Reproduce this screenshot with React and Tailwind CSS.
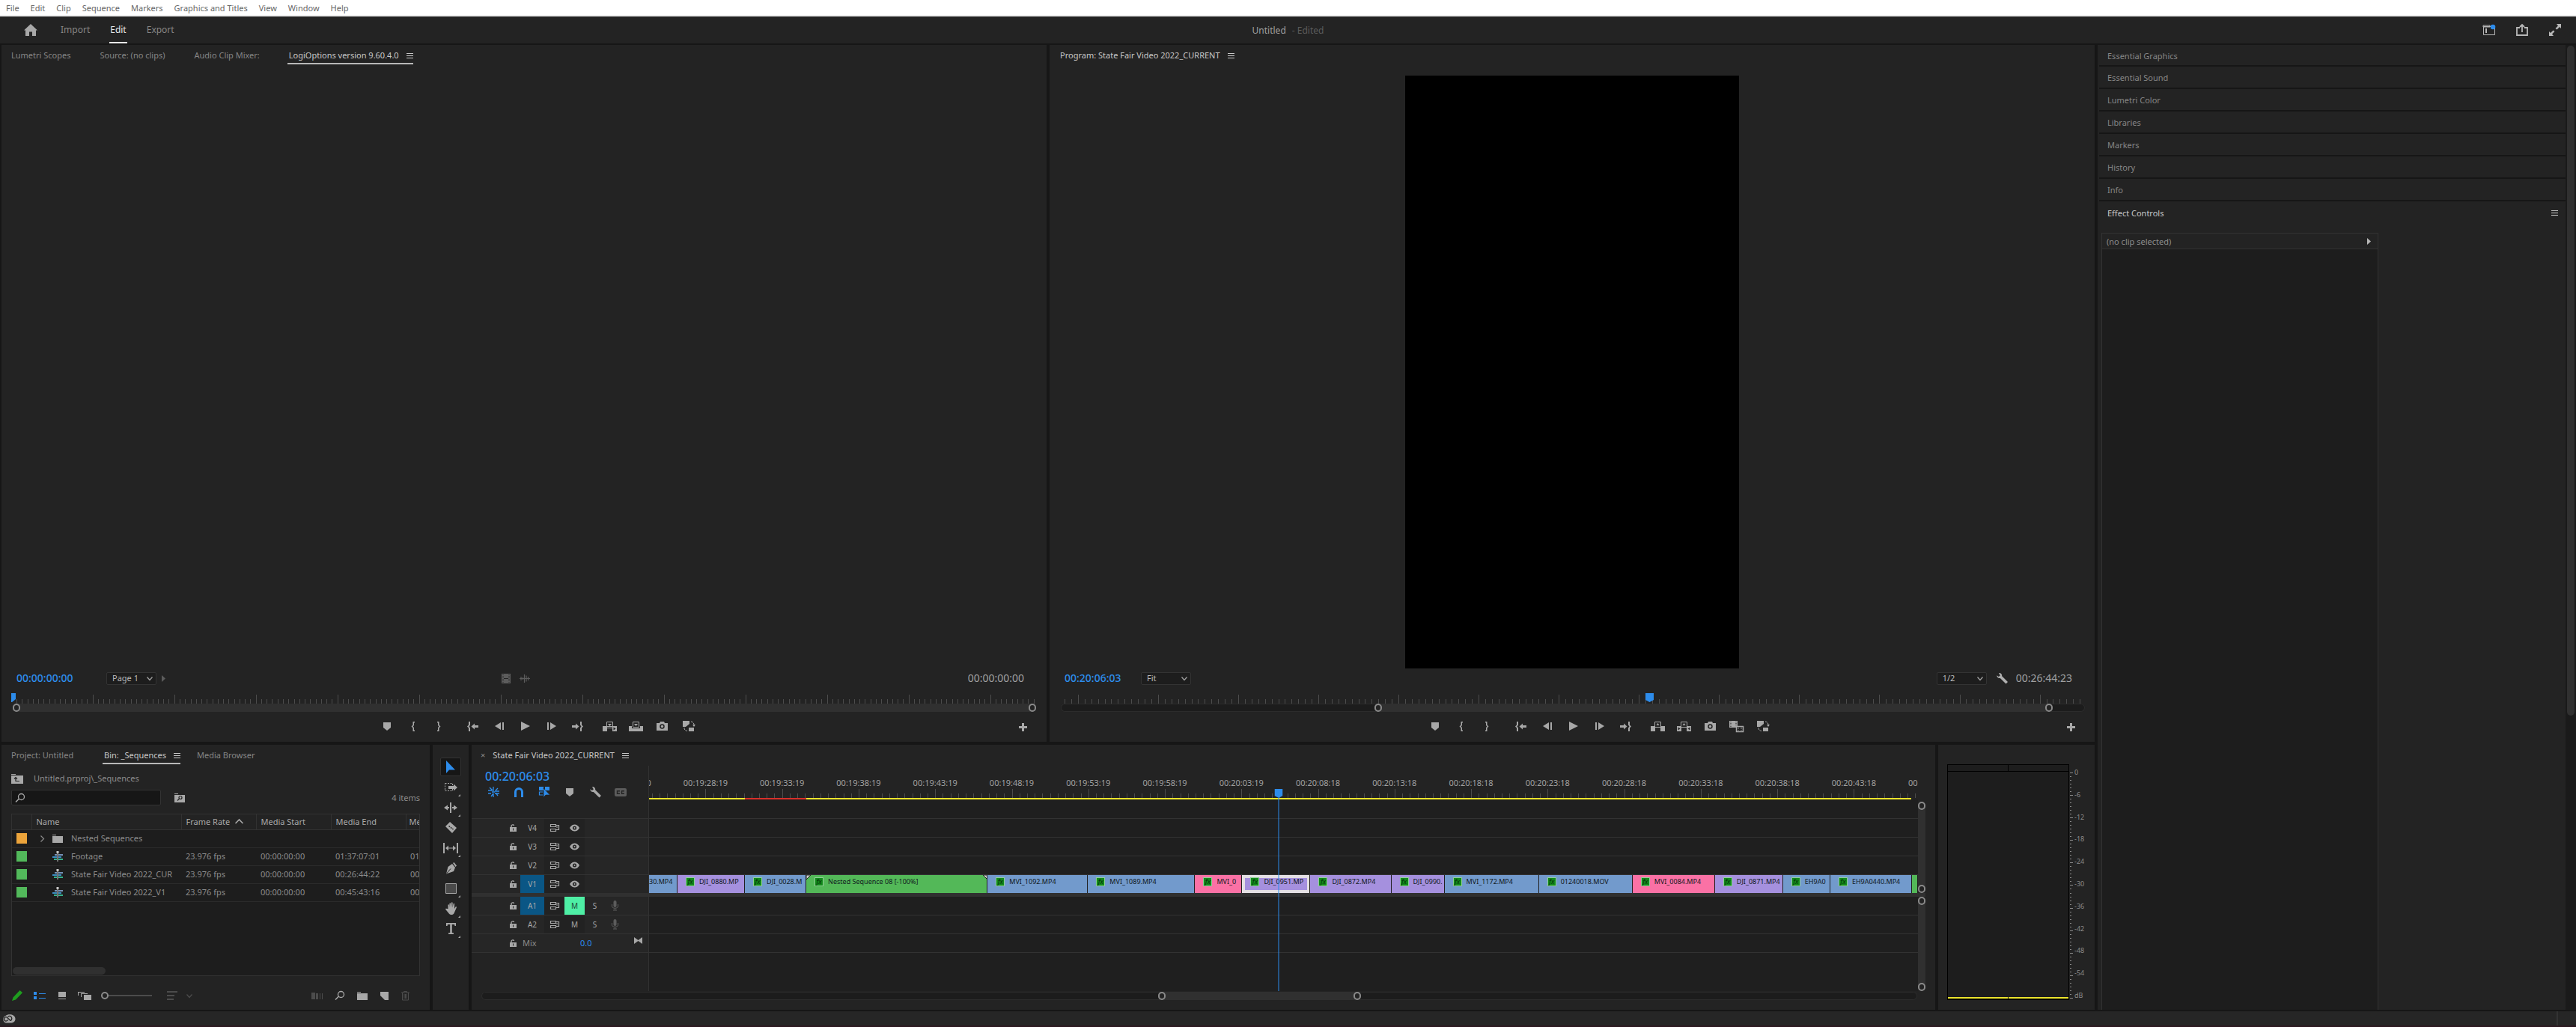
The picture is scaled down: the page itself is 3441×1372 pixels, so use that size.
import { useState } from "react";
import clsx from "clsx";

const MENUS = ["File", "Edit", "Clip", "Sequence", "Markers", "Graphics and Titles", "View", "Window", "Help"];

const SIDE_PANELS = ["Essential Graphics", "Essential Sound", "Lumetri Color", "Libraries", "Markers", "History", "Info"];

const BIN_ITEMS = [
  { name: "Nested Sequences", folder: true, color: "bg-[#eca43b]" },
  { name: "Footage", color: "bg-[#52b95b]", rate: "23.976 fps", start: "00:00:00:00", end: "01:37:07:01", rest: "01" },
  { name: "State Fair Video 2022_CUR", color: "bg-[#52b95b]", rate: "23.976 fps", start: "00:00:00:00", end: "00:26:44:22", rest: "00" },
  { name: "State Fair Video 2022_V1", color: "bg-[#52b95b]", rate: "23.976 fps", start: "00:00:00:00", end: "00:45:43:16", rest: "00" },
];

const BLUE = "bg-[#729acc]";
const PURPLE = "bg-[#a590de]";
const GREEN = "bg-[#53b858]";
const PINK = "bg-[#fa71a5]";

// size = share of the visible range of the timeline
const CLIPS = [
  { name: "30.MP4", size: 38, color: BLUE, cut: true },
  { name: "DJI_0880.MP", size: 90, color: PURPLE },
  { name: "DJI_0028.M", size: 82, color: BLUE },
  { name: "Nested Sequence 08 [-100%]", size: 242, color: GREEN, nested: true },
  { name: "MVI_1092.MP4", size: 134, color: BLUE },
  { name: "MVI_1089.MP4", size: 143, color: BLUE },
  { name: "MVI_0", size: 63, color: PINK },
  { name: "DJI_0951.MP", size: 91, color: PURPLE, selected: true },
  { name: "DJI_0872.MP4", size: 108, color: PURPLE },
  { name: "DJI_0990.", size: 71, color: PURPLE },
  { name: "MVI_1172.MP4", size: 126, color: BLUE },
  { name: "01240018.MOV", size: 125, color: BLUE },
  { name: "MVI_0084.MP4", size: 110, color: PINK },
  { name: "DJI_0871.MP4", size: 91, color: PURPLE },
  { name: "EH9A0", size: 63, color: BLUE },
  { name: "EH9A0440.MP4", size: 109, color: BLUE },
  { name: "", size: 8, color: GREEN, cut: true },
];

const TIMES = [
  "00:19:23:20", "00:19:28:19", "00:19:33:19", "00:19:38:19", "00:19:43:19", "00:19:48:19",
  "00:19:53:19", "00:19:58:19", "00:20:03:19", "00:20:08:18", "00:20:13:18", "00:20:18:18",
  "00:20:23:18", "00:20:28:18", "00:20:33:18", "00:20:38:18", "00:20:43:18", "00:20:48:18",
];

const DB = ["0", "-6", "-12", "-18", "-24", "-30", "-36", "-42", "-48", "-54", "dB"];

const ICONS = {
  home: <path d="M9 0 18 8.500h-2V16h-5v-5.500H7V16H2V8.500H0z" />,
  menu: <path d="M0 0h9v1H0zM0 3h9v1H0zM0 6h9v1H0z" />,
  marker: <path d="M0 0h10v7l-5 4-5-4z" />,
  markIn: <path d="M2.500 0H5v1.500H4V5L2.500 6.500 4 8v3.500h1V13H2.500V8.500L.5 6.500l2-2z" />,
  markOut: <path d="M2.500 0H0v1.500h1V5l1.500 1.500L1 8v3.500H0V13h2.500V8.500l2-2-2-2z" />,
  goIn: <path d="M2 0h2v4.500L2.500 6.500 4 8.500V13H2V8.500L0 6.500l2-2zM5.500 6.500 10 2.500V5h5v3h-5v2.500z" />,
  goOut: <path d="M13 0h-2v4.500l1.500 2-1.500 2V13h2V8.500l2-2-2-2zM9.500 6.500 5 2.500V5H0v3h5v2.500z" />,
  stepBack: <path d="M8 0v10L0 5zM10 0h2v10h-2z" />,
  stepForward: <path d="M4 0v10l8-5zM0 0h2v10H0z" />,
  play: <path d="M0 0v12l12-6z" />,
  insert: (
    <>
      <path d="M0 6h6v7H0zM13 6h6v7h-6z" />
      <path d="M5.500 .5h8v6h-8z" fill="none" stroke="currentColor" />
      <path d="M7 3h5L9.500 6zM6 8h7v1H6z" />
      <path d="M14.500 7.500v4l3-2z" fill="#232323" />
    </>
  ),
  overwrite: (
    <>
      <path d="M0 6h4v3h11V6h4v7H0z" />
      <path d="M5.500 .5h8v7h-8z" fill="none" stroke="currentColor" />
      <path d="M7 3h5L9.500 6z" />
    </>
  ),
  lift: (
    <>
      <path d="M0 6h6v7H0zM13 6h6v7h-6z" />
      <path d="M5.500 .5h8v7h-8z" fill="none" stroke="currentColor" />
      <path d="M7.500 5h4l-2-3z" />
    </>
  ),
  extract: (
    <>
      <path d="M0 6h6v7H0zM13 6h6v7h-6z" />
      <path d="M5.500 .5h8v7h-8z" fill="none" stroke="currentColor" />
      <path d="M7.500 5h4l-2-3z" />
      <path d="M1.500 7.500v4l3-2zM17.500 7.500v4l-3-2z" fill="#232323" />
    </>
  ),
  camera: (
    <>
      <path d="M0 2h4l1-2h5l1 2h4v10H0z" />
      <circle cx="7.500" cy="6.500" r="2.500" fill="none" stroke="#232323" strokeWidth="1.500" />
    </>
  ),
  compare: (
    <>
      <path d="M0 0h11v9H0z" />
      <path d="M9.500 7.500h9v7h-9z" fill="#232323" stroke="currentColor" strokeWidth="1.500" />
      <path d="M2 1v7M9 1v6" stroke="#232323" strokeDasharray="1 1" />
      <path d="M12 8v6M16 8v6" stroke="currentColor" strokeDasharray="1 1" />
    </>
  ),
  proxy: (
    <>
      <path d="M0 0h9v4L4 8H0zM8 9h7v5H8z" />
      <path d="M11 1c3 .5 4 2 4 5M2 9c0 3 1.500 4 4 4.500" fill="none" stroke="currentColor" strokeDasharray="3 1" />
      <path d="M13 5h4l-2 3z" />
    </>
  ),
  plus: <path d="M4 0h3v4h4v3H7v4H4V7H0V4h4z" />,
  film: (
    <>
      <path d="M0 0h12v13H0z" />
      <path d="M2 1v11M10 1v11" stroke="#232323" strokeDasharray="1 1" />
      <path d="M3 6h6v1H3z" fill="#232323" />
    </>
  ),
  wave: <path d="M0 5.500h14M2 3v5M4.500 4v3M6.500 0v11M9 1.500v8M11.500 3v5" stroke="currentColor" strokeWidth="1.200" />,
  triangle: <path d="M0 0v9l5-4.500z" />,
  chevronDown: <path d="M.5 .5 4 4.500 7.500 .5" fill="none" stroke="currentColor" strokeWidth="1.300" />,
  chevronRight: <path d="M.5 .5 4.500 4.500.5 8.500" fill="none" stroke="currentColor" strokeWidth="1.200" />,
  sortUp: <path d="M.5 6 5.500 1l5 5" fill="none" stroke="currentColor" strokeWidth="1.600" />,
  wrench: <path d="M3 0c2.500-.3 4.500 1.500 4.200 4.200L15 12l-2.500 2.500L4.800 7C2.500 7.500.3 5.800.3 3.200L2.800 5l2-1.500z" />,
  folder: <path d="M0 0h5v1H0zM0 2h14v9H0z" />,
  folderUp: (
    <>
      <path d="M0 0h6v1H0zM0 2h16v11H0z" />
      <path d="M6 4.500v5h5M4 6.500l2-2 2 2" fill="none" stroke="#232323" strokeWidth="1.200" />
    </>
  ),
  folderSearch: (
    <>
      <path d="M0 0h5v1H0zM0 2h14v10H0z" />
      <circle cx="8" cy="5.500" r="2" fill="none" stroke="#232323" strokeWidth="1.200" />
      <path d="M6.500 7 4 9.500" stroke="#232323" strokeWidth="1.200" />
    </>
  ),
  search: (
    <>
      <circle cx="7.500" cy="4.500" r="4" fill="none" stroke="currentColor" strokeWidth="1.300" />
      <path d="M4.500 7 0 11.500" stroke="currentColor" strokeWidth="1.600" />
    </>
  ),
  sequence: (
    <>
      <path d="M3 4h3v2H3zM8 4h6v2H8z" fill="#7592b8" />
      <path d="M0 7h6v2H0zM8 7h4v2H8z" fill="#3c8fc4" />
      <path d="M2 10h4v2H2zM8 10h6v2H8z" fill="#35b08a" />
      <path d="M6.500 1h1v13h-1zM5.500 0h3v3h-3z" fill="#c8c8c8" />
    </>
  ),
  pencil: <path d="M0 13l1.500-4.500L9.500 0 13 3.200 5 11.500zM9.500 0l1-1L14 2l-1 1.200z" />,
  list: <path d="M0 0h4v4H0zM0 6h4v4H0zM7 2h9v1H7zM7 8h9v1H7z" />,
  iconView: <path d="M0 0h10v7H0zM0 9h10v1H0z" />,
  freeform: <path d="M0 0h9v1H1v4H0zM4 2h9v1H5v4H4zM8 4h10v7H8z" />,
  sort: <path d="M0 0h14v2H0zM0 5h10v2H0zM0 10h9v2H0z" />,
  automate: <path d="M0 0h5v9H0zM6 1h3v8H6zM11 1h1v8h-1zM14 1h1v8h-1z" />,
  newItem: <path d="M0 0h11v11H6L0 5z" />,
  trash: <path d="M0 2h11M3.500 2V.5h4V2M1.500 2v10h8V2M4 4v6M5.500 4v6M7 4v6" fill="none" stroke="currentColor" />,
  arrow: <path d="M0 0v17l4-4.500 8 0z" />,
  trackSelect: (
    <>
      <path d="M.5 .5h10v10H.5z" fill="none" stroke="currentColor" strokeDasharray="2 1.500" />
      <path d="M5 4h7V1.500L17 6l-5 4.500V8H5z" />
    </>
  ),
  ripple: <path d="M8 0h2v14H8zM7 6v2H5v2.500L0 7l5-3.500V6zM11 6v2h2v2.500L18 7l-5-3.500V6z" />,
  razor: (
    <>
      <path d="M6 0 15 8 9 15 0 6z" />
      <path d="M4.500 5.500 10.500 10" stroke="#232323" strokeWidth="1.500" strokeDasharray="2 1" />
    </>
  ),
  slip: <path d="M0 0h2v14H0zM18 0h2v14h-2zM3 7l4-3.500v3h6v-3L17 7l-4 3.500v-3H7v3z" />,
  pen: (
    <>
      <path d="M10 1l1.500-1L15 4.500 13.500 6zM9 2l4 5-2 5-10 3.500L3.500 6z" />
      <path d="M1.500 15 7 8.500" stroke="#232323" />
    </>
  ),
  rect: <path d="M.5 .5h14v13H.5z" fill="#4a4a4a" stroke="currentColor" />,
  hand: <path d="M3.500 8V3c0-1 1.500-1 1.500 0v3.500l.5-5.500c0-1 1.500-1 1.500 0v5.500L8 0c0-1 1.600-1 1.600 0v6.500l1-5c0-1 1.500-.8 1.500.2L12 8l1.500-2.500c.6-.8 1.800-.2 1.400.7L12 13c-.5 1.500-1.500 3-3.500 3h-1C6 16 5 15 4 13.500L.3 9c-.6-.9.6-1.800 1.500-1z" />,
  type: <path d="M0 0h13v4h-1.500L11 2H7.800v11l2.200.5v1.500H3V13.500l2.200-.5V2H2l-.5 2H0z" />,
  nest: <path d="M0 5h5M2 1l4 4M7 0v6M9 6h6M10 5l3-3M0 9h4M4 13l3-4M7 9v5M10 8l3 4M9 9h6M5 7h4" fill="none" stroke="currentColor" strokeWidth="1.300" />,
  magnet: <path d="M0 13V6a6 6 0 0 1 12 0v7H9V6a3 3 0 0 0-6 0v7z" />,
  linked: (
    <>
      <path d="M0 0h6v5H0zM8 0h6v5H8z" />
      <path d="M5 7H.5v4H5" fill="none" stroke="currentColor" strokeWidth="1.200" />
      <path d="M6 2v12l3-3h5.500z" stroke="#232323" strokeWidth=".6" />
    </>
  ),
  cc: (
    <>
      <rect width="16" height="11" rx="2" />
      <path d="M7 3.800H3.500v3.500H7M13 3.800H9.500v3.500H13" fill="none" stroke="#232323" strokeWidth="1.400" />
    </>
  ),
  lock: (
    <>
      <path d="M0 4h9v6H0z" />
      <path d="M2 4V2.500C2 .5 5.500.2 5.500 2" fill="none" stroke="currentColor" strokeWidth="1.400" />
      <path d="M4 5.500h1v3H4z" fill="#232323" />
    </>
  ),
  sync: <path d="M.5 .5h7v3h-7zM.5 6.500h7v3h-7zM8 1.500h3.500v6H8M8 4h2" fill="none" stroke="currentColor" strokeWidth="1.200" />,
  eye: (
    <>
      <path d="M0 5c3-6 10-6 13 0-3 6-10 6-13 0z" />
      <circle cx="6.500" cy="5" r="2.600" fill="#232323" />
      <circle cx="6.500" cy="5" r="1" />
    </>
  ),
  mic: (
    <>
      <rect x="2.500" width="4" height="9" rx="2" />
      <path d="M.5 5v3c0 3 8 3 8 0V5M4.500 10v3M2 13h5" fill="none" stroke="currentColor" />
    </>
  ),
  collapse: <path d="M0 0l5.500 4L11 0v9L5.500 5 0 9z" />,
  workspace: (
    <>
      <path d="M.5 2.500h15v11H.5zM0 1h9v2H0z" fill="none" stroke="currentColor" />
      <path d="M3 5h2v6H3z" />
      <circle cx="13" cy="3" r="3.300" fill="#2d8ceb" />
    </>
  ),
  share: <path d="M5 5H1v10h14V5h-4M8 11V2M5 4l3-3 3 3" fill="none" stroke="currentColor" strokeWidth="1.800" />,
  fullscreen: <path d="M16 0v6l-2-2-3.500 3.500L8.500 6 12 2.500 10 0zM0 16v-6l2 2 3.500-3.500 2 1.500L4 13.500 6 16z" />,
  cloud: (
    <>
      <path d="M5 12.500a5 5 0 0 1-.5-9.500C8-.5 17.500 1 17.500 7c0 4-3 5.500-6 5.500z" fill="#a8a8a8" />
      <path d="M11 9.500 6.500 5.200a2.600 2.600 0 1 0 0 4.300l1-1M7.500 4.200a3.200 3.200 0 1 1 3.500 5.300" fill="none" stroke="#232323" strokeWidth="1.300" />
    </>
  ),
};

function Icon({ name, w, h, className }) {
  return (
    <svg width={w} height={h} viewBox={`0 0 ${w} ${h}`} fill="currentColor" className={clsx("shrink-0 overflow-visible", className)} aria-hidden="true">
      {ICONS[name]}
    </svg>
  );
}

function IconButton({ label, name, w, h, className, children }) {
  return (
    <button type="button" aria-label={label} className={clsx("flex shrink-0 items-center justify-center", className)}>
      <Icon name={name} w={w} h={h} />
      {children}
    </button>
  );
}

function Tab({ label, active, underline = true, className }) {
  return (
    <button
      type="button"
      className={clsx(
        "flex h-[26px] shrink-0 items-center gap-[10px] border-b-2 pt-1 pl-[2px]",
        active ? "text-[#c8c8c8]" : "text-[#868686]",
        active && underline ? "border-[#b8b8b8]" : "border-transparent",
        className
      )}
    >
      <span>{label}</span>
      {active && <Icon name="menu" w={9} h={7} />}
    </button>
  );
}

function Dropdown({ label, options, className }) {
  return (
    <span className={clsx("relative flex h-[17px]", className)}>
      <select aria-label={label} className="w-full appearance-none rounded-[2px] border border-[#333333] bg-[#1d1d1d] pl-[7px] text-[11px] leading-[14px] text-[#b8b8b8]">
        {options.map((o) => (
          <option key={o}>{o}</option>
        ))}
      </select>
      <Icon name="chevronDown" w={8} h={5} className="pointer-events-none absolute top-[6px] right-[5px] text-[#a0a0a0]" />
    </span>
  );
}

function Ring() {
  return <span className="h-[11px] w-[10px] shrink-0 rounded-full border-2 border-[#8a8a8a] bg-[#232323]" />;
}

// horizontal zoom bar: before / thumb / after are shares of the track
function ZoomBar({ before, thumb, after, className }) {
  return (
    <div className={clsx("flex h-[11px] rounded-full bg-[#1c1c1c] ring-1 ring-[#2c2c2c] ring-inset", className)}>
      <div style={{ flexGrow: before }} className="basis-0" />
      <div style={{ flexGrow: thumb }} className="flex basis-0 justify-between rounded-full bg-[#303030]">
        <Ring />
        <Ring />
      </div>
      <div style={{ flexGrow: after }} className="basis-0" />
    </div>
  );
}

function Ruler({ count, every, first }) {
  return (
    <div className="flex h-full items-end justify-between">
      {Array.from({ length: count }, (_, i) => (
        <span key={i} className={clsx("w-px bg-[#4c4c4c]", i % every === first ? "h-[12px]" : "h-[6px]")} />
      ))}
    </div>
  );
}

function Transport({ edits }) {
  const cell = "h-[22px] w-[35px]";
  return (
    <div className="mt-2 grid grid-cols-[1fr_auto_1fr] text-[#a8a8a8]">
      <div />
      <div className="flex pl-[36px]">
        <IconButton label="Add Marker" name="marker" w={10} h={11} className={cell} />
        <IconButton label="Mark In" name="markIn" w={5} h={13} className={cell} />
        <IconButton label="Mark Out" name="markOut" w={5} h={13} className={cell} />
        <IconButton label="Go to In" name="goIn" w={15} h={13} className="ml-[10px] h-[22px] w-[35px]" />
        <IconButton label="Step Back" name="stepBack" w={12} h={10} className={cell} />
        <IconButton label="Play" name="play" w={12} h={12} className={cell} />
        <IconButton label="Step Forward" name="stepForward" w={12} h={10} className={cell} />
        <IconButton label="Go to Out" name="goOut" w={15} h={13} className={cell} />
        <div className="flex w-[148px] pl-2">
          {edits.map((e) => (
            <IconButton key={e.name} label={e.label} name={e.name} w={e.w} h={e.h} className={cell} />
          ))}
        </div>
      </div>
      <IconButton label="Button Editor" name="plus" w={11} h={11} className="mt-[1px] mr-[26px] h-[22px] justify-self-end" />
    </div>
  );
}

function SourceMonitor() {
  return (
    <section className="flex min-w-0 flex-col bg-[#232323] pb-[9px]">
      <div className="flex gap-[37px] pl-[11px]">
        <Tab label="Lumetri Scopes" />
        <Tab label="Source: (no clips)" />
        <Tab label="Audio Clip Mixer:" />
        <Tab label="LogiOptions version 9.60.4.0" active />
      </div>
      <div className="flex-1" />
      <div className="grid h-[18px] grid-cols-[1fr_auto_1fr] items-center pr-[30px] pl-[20px]">
        <div className="flex items-center">
          <span className="w-[120px] text-[14px] leading-4 font-medium text-[#2d8ceb]">00:00:00:00</span>
          <Dropdown label="Page" options={["Page 1"]} className="w-[67px]" />
          <IconButton label="Next Page" name="triangle" w={5} h={9} className="ml-[7px] text-[#5c5c5c]" />
        </div>
        <div className="flex items-center gap-3 pr-[12px] text-[#5c5c5c]">
          <Icon name="film" w={12} h={13} />
          <Icon name="wave" w={14} h={11} />
        </div>
        <span className="text-right text-[14px] leading-4 text-[#a0a0a0]">00:00:00:00</span>
      </div>
      <div className="relative mt-[11px] h-[14px] pr-[15px] pl-[20px]">
        <Ruler count={188} every={15} first={14} />
        <svg width="6" height="12" className="absolute top-0 left-[13px]" fill="#2d8ceb">
          <path d="M0 0h6v8l-5 4H0z" />
        </svg>
      </div>
      <ZoomBar before={0} thumb={1} after={0} className="mr-[14px] ml-[15px]" />
      <Transport
        edits={[
          { label: "Insert", name: "insert", w: 19, h: 13 },
          { label: "Overwrite", name: "overwrite", w: 19, h: 13 },
          { label: "Export Frame", name: "camera", w: 15, h: 12 },
          { label: "Toggle Proxies", name: "proxy", w: 16, h: 14 },
        ]}
      />
    </section>
  );
}

function ProgramMonitor() {
  return (
    <section className="flex min-w-0 flex-col bg-[#232323] pb-[9px]">
      <div className="flex pl-[12px]">
        <Tab label="Program: State Fair Video 2022_CURRENT" active underline={false} />
      </div>
      <div className="mt-[15px] mb-1 flex min-h-0 flex-1 justify-center">
        <div className="aspect-[9/16] h-full bg-black" />
      </div>
      <div className="flex h-[18px] items-center pr-[30px] pl-[20px]">
        <span className="w-[102px] text-[14px] leading-4 font-medium text-[#2d8ceb]">00:20:06:03</span>
        <Dropdown label="Zoom Level" options={["Fit"]} className="w-[67px]" />
        <div className="flex-1" />
        <Dropdown label="Playback Resolution" options={["1/2"]} className="w-[67px]" />
        <IconButton label="Settings" name="wrench" w={15} h={15} className="mr-[11px] ml-[13px] text-[#b0b0b0]" />
        <span className="text-[14px] leading-4 text-[#a0a0a0]">00:26:44:23</span>
      </div>
      <div className="relative mt-[11px] h-[14px] pr-[17px] pl-[20px]">
        <Ruler count={153} every={12} first={2} />
        <svg width="11" height="12" className="absolute top-0 left-[57%]" fill="#2d8ceb">
          <path d="M0 0h11v9l-5.500 3L0 9z" />
        </svg>
      </div>
      <ZoomBar before={419} thumb={905} after={43} className="mr-[13px] ml-[15px]" />
      <Transport
        edits={[
          { label: "Lift", name: "lift", w: 19, h: 13 },
          { label: "Extract", name: "extract", w: 19, h: 13 },
          { label: "Export Frame", name: "camera", w: 15, h: 12 },
          { label: "Comparison View", name: "compare", w: 19, h: 15 },
          { label: "Toggle Proxies", name: "proxy", w: 16, h: 14 },
        ]}
      />
    </section>
  );
}

function ProjectPanel() {
  const [query, setQuery] = useState("");
  const th = "border-r border-[#323232] pl-[6px] text-left font-normal whitespace-nowrap";
  const td = "pl-[6px] whitespace-nowrap";

  return (
    <section className="flex w-[572px] shrink-0 flex-col bg-[#232323] px-[13px] pb-2">
      <div className="-ml-[2px] flex">
        <Tab label="Project: Untitled" className="w-[124px]" />
        <Tab label="Bin: _Sequences" active />
        <Tab label="Media Browser" className="ml-[20px]" />
      </div>
      <div className="mt-[9px] flex h-[20px] items-center gap-[14px] text-[#8c8c8c]">
        <IconButton label="Up One Level" name="folderUp" w={16} h={13} className="text-[#a8a8a8]" />
        <span>Untitled.prproj\_Sequences</span>
      </div>
      <div className="mt-[5px] flex h-[21px] items-center">
        <label className="flex h-full w-[200px] items-center rounded-[2px] border border-[#333333] bg-[#161616] px-[5px] text-[#a8a8a8]">
          <Icon name="search" w={12} h={12} />
          <input
            type="text"
            aria-label="Search bin"
            value={query}
            onChange={(e) => setQuery(e.target.value)}
            className="ml-2 w-full min-w-0 bg-transparent outline-none"
          />
        </label>
        <IconButton label="Create Search Bin" name="folderSearch" w={14} h={12} className="ml-[18px] text-[#a8a8a8]" />
        <span className="ml-auto text-[#8c8c8c]">4 items</span>
      </div>

      <div className="mt-[11px] flex min-h-0 flex-1 flex-col overflow-hidden border border-[#323232] bg-[#1d1d1d]">
        <table className="w-full table-fixed border-collapse text-[#8c8c8c]">
          <colgroup>
            <col className="w-[26px]" />
            <col className="w-[200px]" />
            <col className="w-[100px]" />
            <col className="w-[100px]" />
            <col className="w-[100px]" />
            <col />
          </colgroup>
          <thead>
            <tr className="h-[20px] border-b border-[#323232] bg-[#232323] text-[#a8a8a8]">
              <th className={th} aria-label="Label" />
              <th className={th}>Name</th>
              <th className={th}>
                <span className="flex items-center gap-[7px]">
                  Frame Rate <Icon name="sortUp" w={11} h={7} />
                </span>
              </th>
              <th className={th}>Media Start</th>
              <th className={th}>Media End</th>
              <th className="pl-[4px] text-left font-normal">Me</th>
            </tr>
          </thead>
          <tbody>
            {BIN_ITEMS.map((item) => (
              <tr key={item.name} className="h-[24px] border-b border-[#2b2b2b]">
                <td>
                  <span className={clsx("mx-auto block h-[14px] w-[14px]", item.color)} />
                </td>
                <td className="whitespace-nowrap">
                  <span className="flex items-center">
                    <span className="flex w-[28px] justify-center">{item.folder && <Icon name="chevronRight" w={5} h={9} />}</span>
                    <span className="flex w-[25px] text-[#a8a8a8]">
                      <Icon name={item.folder ? "folder" : "sequence"} w={14} h={item.folder ? 11 : 14} />
                    </span>
                    {item.name}
                  </span>
                </td>
                <td className={td}>{item.rate}</td>
                <td className={td}>{item.start}</td>
                <td className={td}>{item.end}</td>
                <td className={td}>{item.rest}</td>
              </tr>
            ))}
          </tbody>
        </table>
        <div className="mt-auto mb-[1px] ml-[1px] h-[10px] w-[124px] shrink-0 rounded-full bg-[#303030]" />
      </div>

      <div className="mt-[15px] flex h-[22px] items-center text-[#a8a8a8]">
        <IconButton label="Project Writable" name="pencil" w={14} h={13} className="w-[16px] text-[#1f9d1f]" />
        <IconButton label="List View" name="list" w={16} h={10} className="ml-[14px] text-[#2d8ceb]" />
        <IconButton label="Icon View" name="iconView" w={10} h={10} className="ml-[17px]" />
        <IconButton label="Freeform View" name="freeform" w={18} h={11} className="ml-[16px]" />
        <input
          type="range"
          aria-label="Icon Size"
          defaultValue={0}
          className="ml-[13px] w-[68px] appearance-none bg-transparent [&::-webkit-slider-runnable-track]:h-[2px] [&::-webkit-slider-runnable-track]:bg-[#4c4c4c] [&::-webkit-slider-thumb]:-mt-[4px] [&::-webkit-slider-thumb]:h-[10px] [&::-webkit-slider-thumb]:w-[10px] [&::-webkit-slider-thumb]:appearance-none [&::-webkit-slider-thumb]:rounded-full [&::-webkit-slider-thumb]:border-2 [&::-webkit-slider-thumb]:border-[#8a8a8a] [&::-webkit-slider-thumb]:bg-[#232323]"
        />
        <IconButton label="Sort Icons" name="sort" w={14} h={12} className="ml-[20px] text-[#4c4c4c]" />
        <IconButton label="Sort Options" name="chevronDown" w={8} h={5} className="ml-[12px] text-[#4c4c4c]" />
        <div className="ml-auto flex items-center gap-[17px] pr-[14px]">
          <IconButton label="Automate to Sequence" name="automate" w={15} h={9} className="text-[#4c4c4c]" />
          <IconButton label="Find" name="search" w={12} h={12} />
          <IconButton label="New Bin" name="folder" w={14} h={11} />
          <IconButton label="New Item" name="newItem" w={11} h={11} />
          <IconButton label="Clear" name="trash" w={11} h={12} className="text-[#4c4c4c]" />
        </div>
      </div>
    </section>
  );
}

const TOOLS = [
  { label: "Selection Tool", name: "arrow", w: 12, h: 17 },
  { label: "Track Select Forward Tool", name: "trackSelect", w: 17, h: 11, more: true },
  { label: "Ripple Edit Tool", name: "ripple", w: 18, h: 14, more: true },
  { label: "Razor Tool", name: "razor", w: 15, h: 15 },
  { label: "Slip Tool", name: "slip", w: 20, h: 14, more: true },
  { label: "Pen Tool", name: "pen", w: 15, h: 16 },
  { label: "Rectangle Tool", name: "rect", w: 15, h: 14, more: true },
  { label: "Hand Tool", name: "hand", w: 15, h: 16, more: true },
  { label: "Type Tool", name: "type", w: 13, h: 15, more: true },
];

function Toolbox() {
  return (
    <section className="flex w-[48px] shrink-0 flex-col items-center gap-[2px] bg-[#232323] pt-[17px] text-[#a8a8a8]">
      {TOOLS.map((t, i) => (
        <IconButton
          key={t.name}
          label={t.label}
          name={t.name}
          w={t.w}
          h={t.h}
          className={clsx("relative h-[25px] w-[28px] rounded-[2px]", i === 0 && "border border-[#333333] bg-[#161616] text-[#2d8ceb]")}
        >
          {t.more && (
            <svg width="3" height="3" className="absolute right-[1px] bottom-0" fill="currentColor">
              <path d="M3 0v3H0z" />
            </svg>
          )}
        </IconButton>
      ))}
    </section>
  );
}

function TrackHeader({ id, audio, target, muted }) {
  return (
    <div className={clsx("flex items-center bg-[#262626] pl-[51px] text-[#a8a8a8]", id === "V1" ? "h-[24px]" : "h-[25px] border-b border-[#323232]")}>
      <IconButton label={`Lock ${id}`} name="lock" w={9} h={10} />
      <button type="button" className={clsx("ml-[5px] h-full w-[32px] text-[10px]", target && "bg-[#0a5685]")}>
        {id}
      </button>
      <IconButton label={`Sync Lock ${id}`} name="sync" w={12} h={10} className="h-full w-[27px] bg-[#222222]" />
      {audio ? (
        <>
          <button type="button" className={clsx("h-full w-[27px] text-[10px]", muted ? "bg-[#4eefa5] text-[#1d4a35]" : "bg-[#222222]")}>
            M
          </button>
          <button type="button" className="h-full w-[27px] text-[10px]">
            S
          </button>
          <IconButton label={`Record ${id}`} name="mic" w={9} h={14} className="h-full w-[27px] text-[#5c5c5c]" />
        </>
      ) : (
        <IconButton label={`Toggle ${id} Output`} name="eye" w={13} h={10} className="h-full w-[27px] bg-[#222222]" />
      )}
    </div>
  );
}

function Clip({ clip }) {
  return (
    <div
      style={{ flexGrow: clip.size }}
      className={clsx("relative min-w-0 basis-0 overflow-hidden text-[9px] leading-3 whitespace-nowrap text-[#101820]", clip.color)}
    >
      {clip.selected && <span className="absolute inset-0 border-4 border-[#e4e0e4]" />}
      {clip.nested && (
        <>
          <svg width="6" height="6" className="absolute top-0 left-0">
            <path d="M0 0h6L0 6z" fill="#d0d0d0" stroke="#1f1f1f" />
          </svg>
          <svg width="6" height="6" className="absolute top-0 right-0">
            <path d="M0 0h6v6z" fill="#d0d0d0" stroke="#1f1f1f" />
          </svg>
        </>
      )}
      <div className={clsx("relative flex h-full items-start border-r border-[#1f1f1f] pt-[3px]", !clip.cut && "pl-[11px]")}>
        {!clip.cut && (
          <span className="mr-[6px] h-[12px] w-[12px] shrink-0 border border-[#8fcf95] bg-[#128a1b] text-center leading-[9px] text-[#06330a] italic">
            fx
          </span>
        )}
        <span>{clip.name}</span>
      </div>
    </div>
  );
}

function Lane({ className = "h-[25px]" }) {
  return <div className={clsx("border-b border-[#323232]", className)} />;
}

function Timeline() {
  return (
    <section className="flex min-w-0 flex-1 flex-col bg-[#232323] pb-[13px]">
      <div className="flex h-[28px] items-center gap-[10px] pl-[12px] text-[#c8c8c8]">
        <button type="button" aria-label="Close Sequence" className="text-[#8c8c8c]">
          ×
        </button>
        <span>State Fair Video 2022_CURRENT</span>
        <IconButton label="Panel Menu" name="menu" w={9} h={7} />
      </div>

      <div className="flex min-h-0 flex-1 pr-[13px]">
        <div className="flex w-[237px] shrink-0 flex-col border-r border-[#323232]">
          <span className="h-[25px] pl-[18px] text-[16px] leading-[28px] font-medium text-[#2d8ceb]">00:20:06:03</span>
          <div className="flex h-[20px] pl-[12px] text-[#a8a8a8]">
            <IconButton label="Insert Nested Sequences" name="nest" w={15} h={14} className="w-[34px] text-[#2d8ceb]" />
            <IconButton label="Snap" name="magnet" w={12} h={13} className="w-[34px] text-[#2d8ceb]" />
            <IconButton label="Linked Selection" name="linked" w={15} h={14} className="w-[34px] text-[#2d8ceb]" />
            <IconButton label="Add Marker" name="marker" w={10} h={11} className="w-[34px]" />
            <IconButton label="Display Settings" name="wrench" w={15} h={15} className="w-[34px]" />
            <IconButton label="Captions" name="cc" w={16} h={11} className="w-[34px] text-[#5c5c5c]" />
          </div>
          <div className="h-[26px] border-b border-[#323232]" />
          <TrackHeader id="V4" />
          <TrackHeader id="V3" />
          <TrackHeader id="V2" />
          <TrackHeader id="V1" target />
          <div className="h-[5px] bg-[#303030]" />
          <TrackHeader id="A1" audio target muted />
          <TrackHeader id="A2" audio />
          <div className="flex h-[25px] items-center border-b border-[#323232] bg-[#262626] pr-[8px] pl-[51px] text-[#a8a8a8]">
            <IconButton label="Lock Mix" name="lock" w={9} h={10} />
            <span className="ml-[8px] w-[77px] text-[#8c8c8c]">Mix</span>
            <span className="text-[#2d8ceb]">0.0</span>
            <IconButton label="Collapse Tracks" name="collapse" w={11} h={9} className="mb-2 ml-auto" />
          </div>
        </div>

        <div className="relative flex min-w-0 flex-1 flex-col">
          <div className="overflow-hidden pt-[15px]">
            <div className="-ml-[78px] flex w-[108.600%] text-[#a0a0a0]">
              {TIMES.map((t) => (
                <div key={t} className="flex-1">
                  <div className="text-center leading-4">{t}</div>
                  <div className="flex h-[12px] items-end">
                    {Array.from({ length: 10 }, (_, i) => (
                      <span key={i} className={clsx("flex-1 border-l border-[#4c4c4c]", i === 5 ? "h-full" : "h-[6px]")} />
                    ))}
                  </div>
                </div>
              ))}
            </div>
            <div className="flex h-[2px]">
              <div className="grow-[128] bg-[#ece52c]" />
              <div className="grow-[82] bg-[#d8302a]" />
              <div className="grow-[1475] bg-[#ece52c]" />
              <div className="grow-[9]" />
            </div>
          </div>
          <div className="flex-1 bg-[#1f1f1f]">
            <Lane className="h-[26px]" />
            <Lane />
            <Lane />
            <Lane />
            <div className="flex h-[24px]">
              {CLIPS.map((c, i) => (
                <Clip key={i} clip={c} />
              ))}
            </div>
            <div className="h-[5px] bg-[#303030]" />
            <Lane />
            <Lane />
            <Lane />
          </div>
          <div className="absolute top-[31px] bottom-0 left-[49.600%] flex w-[11px] -translate-x-1/2 flex-col items-center">
            <svg width="11" height="12" fill="#2d8ceb" className="shrink-0">
              <path d="M0 0h11v9l-5.500 3L0 9z" />
            </svg>
            <div className="w-px flex-1 bg-[#2d8ceb]" />
          </div>
        </div>

        <div className="flex w-[10px] shrink-0 flex-col pt-[48px]">
          <div className="flex h-[122px] flex-col justify-between rounded-full bg-[#303030]">
            <Ring />
            <Ring />
          </div>
          <div className="h-[5px] bg-[#303030]" />
          <div className="flex flex-1 flex-col justify-between rounded-full bg-[#303030]">
            <Ring />
            <Ring />
          </div>
        </div>
      </div>
      <ZoomBar before={904} thumb={271} after={743} className="mt-[1px] mr-[24px] ml-[13px]" />
    </section>
  );
}

function AudioMeters() {
  return (
    <section className="flex w-[209px] shrink-0 bg-[#232323] pt-[26px] pb-[13px] pl-3">
      <div className="flex w-[163px] flex-col border border-black bg-[#1d1d1d]">
        <div className="grid h-[9px] grid-cols-2 divide-x divide-black border-b border-black">
          <div />
          <div />
        </div>
        <div className="mt-auto grid grid-cols-2 gap-px border-b border-black">
          <div className="h-[2px] bg-[#ece52c]" />
          <div className="h-[2px] bg-[#ece52c]" />
        </div>
      </div>
      <div className="flex flex-col justify-between pt-[11px] pb-[2px] pl-px">
        {Array.from({ length: 61 }, (_, i) => (
          <span key={i} className={clsx("h-px bg-[#8a8a8a]", i % 6 === 0 ? "w-[4px]" : "w-[2px]")} />
        ))}
      </div>
      <div className="flex flex-col justify-between pt-[5px] pl-[2px] text-[9px] leading-3 text-[#8c8c8c]">
        {DB.map((d) => (
          <span key={d}>{d}</span>
        ))}
      </div>
    </section>
  );
}

function SideDock() {
  return (
    <aside className="flex w-[639px] shrink-0 bg-[#1a1a1a]">
      <div className="flex flex-1 flex-col bg-[#232323] text-[#868686]">
        {SIDE_PANELS.map((p, i) => (
          <button key={p} type="button" className={clsx("ml-[2px] border-b-2 border-[#161616] pt-[2px] pl-[11px] text-left", i === 0 ? "h-[29px]" : "h-[30px]")}>
            {p}
          </button>
        ))}
        <div className="flex h-[30px] shrink-0 items-center justify-between pt-[1px] pr-[10px] pl-[13px] text-[#c8c8c8]">
          <span>Effect Controls</span>
          <IconButton label="Panel Menu" name="menu" w={9} h={7} />
        </div>
        <div className="mt-[12px] ml-[5px] flex w-[370px] flex-1 flex-col border-x border-t border-[#323232] bg-[#1d1d1d]">
          <div className="flex h-[21px] items-center justify-between border-b border-[#323232] bg-[#232323] pt-[1px] pr-[9px] pl-[6px] text-[#8c8c8c]">
            <span>(no clip selected)</span>
            <IconButton label="Show Timeline View" name="triangle" w={5} h={9} className="text-[#b8b8b8]" />
          </div>
        </div>
      </div>
      <div className="w-[14px] pt-px pl-[2px]">
        <div className="h-[895px] w-[10px] rounded-full bg-[#303030]" />
      </div>
    </aside>
  );
}

export default function App() {
  const [page, setPage] = useState("Edit");

  return (
    <div className="flex h-screen flex-col overflow-hidden bg-[#161616] font-['Noto_Sans',sans-serif] text-[11px] leading-4">
      <nav className="flex h-[22px] shrink-0 items-center gap-[15px] border-b-2 border-[#f0f0f0] bg-white pt-[2px] pl-2 text-[#666666]">
        {MENUS.map((m) => (
          <button key={m} type="button">
            {m}
          </button>
        ))}
      </nav>

      <header className="grid h-[36px] shrink-0 grid-cols-[1fr_auto_1fr] bg-[#232323] text-[12px] text-[#868686]">
        <div className="flex items-center gap-[25px] pl-8">
          <IconButton label="Home" name="home" w={18} h={16} className="mr-[5px] text-[#a8a8a8]" />
          {["Import", "Edit", "Export"].map((p) => (
            <button
              key={p}
              type="button"
              onClick={() => setPage(p)}
              className={clsx("h-full border-b-2 px-[1px] pt-[2px]", page === p ? "border-[#e8e8e8] text-[#e8e8e8]" : "border-transparent")}
            >
              {p}
            </button>
          ))}
        </div>
        <div className="flex items-center gap-2 pt-[1px]">
          <span className="text-[#a0a0a0]">Untitled</span>
          <span className="text-[#5c5c5c]">- Edited</span>
        </div>
        <div className="flex items-center justify-end gap-[28px] pr-[20px] text-[#b8b8b8]">
          <IconButton label="Workspaces" name="workspace" w={16} h={14} />
          <IconButton label="Quick Export" name="share" w={16} h={16} />
          <IconButton label="Full Screen" name="fullscreen" w={16} h={16} />
        </div>
      </header>

      <main className="mt-[2px] flex min-h-0 flex-1 gap-1 pl-[2px]">
        <div className="flex min-w-0 flex-1 flex-col gap-1">
          <div className="grid min-h-0 flex-1 grid-cols-2 gap-1">
            <SourceMonitor />
            <ProgramMonitor />
          </div>
          <div className="flex h-[354px] shrink-0 gap-1">
            <ProjectPanel />
            <Toolbox />
            <Timeline />
            <AudioMeters />
          </div>
        </div>
        <SideDock />
      </main>

      <footer className="mt-[2px] flex h-[21px] shrink-0 items-center justify-between border-b-2 border-[#2c1820] bg-[#262626] pl-[3px]">
        <IconButton label="Creative Cloud" name="cloud" w={18} h={13} />
        <span className="mr-[24px] h-full w-[2px] bg-[#333333]" />
      </footer>
    </div>
  );
}
